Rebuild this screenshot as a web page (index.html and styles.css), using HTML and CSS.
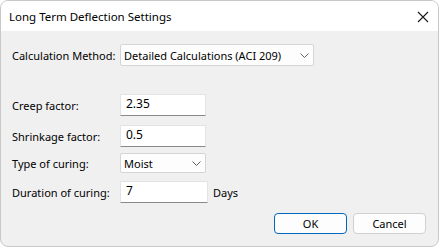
FILE: index.html
```html
<!DOCTYPE html>
<html lang="en">
<head>
    <meta charset="UTF-8">
    <title>Long Term Deflection Settings</title>
    <link rel="stylesheet" href="styles.css">
</head>
<body>

<div class="window">
    <!-- Title bar -->
    <div class="titlebar">
        <span class="title">Long Term Deflection Settings</span>
        <svg class="close" width="12" height="12" viewBox="0 0 12 12">
            <path d="M1 1 L11 11 M11 1 L1 11" stroke="#1a1a1a" stroke-width="1.1" fill="none"/>
        </svg>
    </div>

    <div class="content">
        <div class="row row-method">
            <label>Calculation Method:</label>
            <div class="combo combo-wide">
                <span>Detailed Calculations (ACI 209)</span>
                <svg class="chevron" width="9" height="5" viewBox="0 0 9 5">
                    <path d="M0.5 0.5 L4.5 4.5 L8.5 0.5" stroke="#606060" stroke-width="1" fill="none"/>
                </svg>
            </div>
        </div>

        <div class="row">
            <label>Creep factor:</label>
            <div class="textbox">2.35</div>
        </div>
        <div class="row">
            <label>Shrinkage factor:</label>
            <div class="textbox">0.5</div>
        </div>
        <div class="row row-curing">
            <label>Type of curing:</label>
            <div class="combo combo-small">
                <span>Moist</span>
                <svg class="chevron" width="9" height="5" viewBox="0 0 9 5">
                    <path d="M0.5 0.5 L4.5 4.5 L8.5 0.5" stroke="#606060" stroke-width="1" fill="none"/>
                </svg>
            </div>
        </div>
        <div class="row">
            <label>Duration of curing:</label>
            <div class="textbox textbox-days">7</div>
            <span class="unit">Days</span>
        </div>

        <div class="buttons">
            <button class="btn btn-default">OK</button>
            <button class="btn">Cancel</button>
        </div>
    </div>
</div>

</body>
</html>
```

FILE: styles.css
```css
* {
    margin: 0;
    padding: 0;
    box-sizing: border-box;
}

body {
    background: #ffffff;
    font-family: 'Noto Sans', 'Liberation Sans', sans-serif;
    font-size: 11px;
    color: #000;
    width: 439px;
    height: 248px;
    overflow: hidden;
    white-space: nowrap;
}

.window {
    width: 439px;
    height: 247px;
    border: 1px solid #c8c8c8;
    border-radius: 8px;
    overflow: hidden;
    display: flex;
    flex-direction: column;
    background: #f0f0f0;
}

.titlebar {
    height: 30px;
    background: #ffffff;
    display: flex;
    align-items: center;
    justify-content: space-between;
    padding: 0 9px 0 8px;
    flex-shrink: 0;
}

.title {
    font-size: 11.5px;
    color: #000;
    margin-top: 1px;
}

.close {
    margin-top: 1px;
}

.content {
    flex: 1;
    padding: 13px 12px 0 11px;
    display: flex;
    flex-direction: column;
}

.row {
    display: flex;
    align-items: center;
    margin-bottom: 9px;
}

.row label {
    width: 108px;
    flex-shrink: 0;
}

.row-method {
    margin-bottom: 28px;
}

.row-curing {
    margin-top: -3px;
    margin-bottom: 8px;
}

.combo {
    height: 22px;
    background: #fdfdfd;
    border: 1px solid #d5d5d5;
    border-radius: 2px;
    display: flex;
    align-items: center;
    justify-content: space-between;
    padding: 0 4px 0 3px;
}

.combo-wide {
    width: 194px;
}

.combo-small {
    width: 86px;
    height: 20px;
    padding-left: 3px;
}

.textbox {
    width: 86px;
    height: 22px;
    background: #ffffff;
    border: 1px solid #e3e3e3;
    border-bottom: 1px solid #8a8a8a;
    padding: 0 5px;
    line-height: 18px;
    font-size: 12px;
}

.textbox-days {
    width: 88px;
}

.unit {
    margin-left: 5px;
}

.buttons {
    display: flex;
    justify-content: flex-end;
    gap: 6px;
    margin-top: 1px;
}

.btn {
    width: 73px;
    height: 21px;
    background: #fdfdfd;
    border: 1px solid #d0d0d0;
    border-radius: 4px;
    font-family: inherit;
    font-size: 11px;
    color: #000;
}

.btn-default {
    border-color: #0067c0;
}
```
